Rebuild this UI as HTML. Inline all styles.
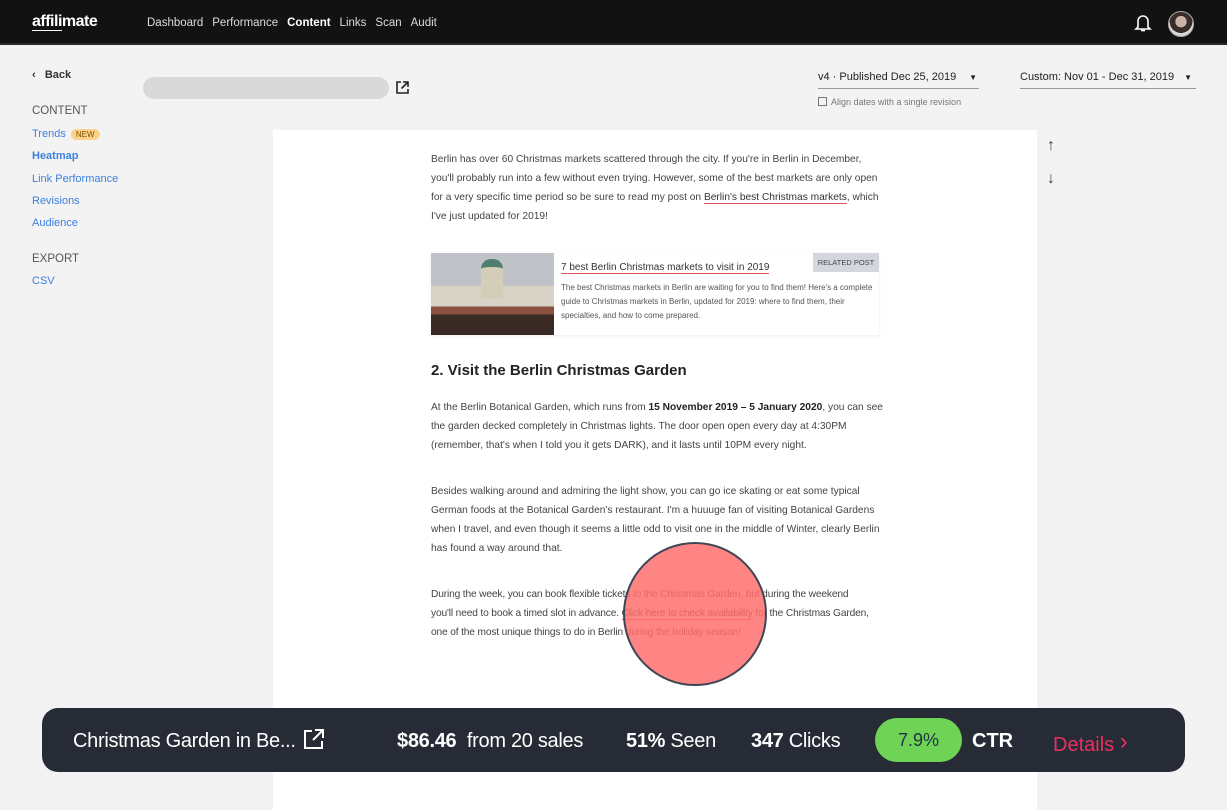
<!DOCTYPE html>
<html><head><meta charset="utf-8"><style>
*{margin:0;padding:0;box-sizing:border-box}
body{width:1227px;height:799px;overflow:hidden;background:#f3f3f3;font-family:"Liberation Sans",sans-serif;position:relative}
.hdr{position:absolute;left:0;top:0;width:1227px;height:45px;background:#121212;border-bottom:2px solid #2a2a2a}
.logo{position:absolute;left:32px;top:13px;color:#fff;font-weight:bold;font-size:16px;letter-spacing:-0.5px}
.nav{position:absolute;top:17px;left:147px;color:#ddd;font-size:11.5px}
.nav span{margin-right:9px}
.side{position:absolute;left:32px;font-size:11px}
.blue{color:#3d7fe0}
.p{position:absolute;left:431px;width:452px;font-size:10.2px;color:#444;line-height:19px}
a{color:#333;text-decoration:none;border-bottom:1px solid #d55}
</style></head><body>
<div class="hdr">
<div class="logo"><span style="border-bottom:1px solid #fff">affili</span>mate</div>
<div class="nav"><span>Dashboard</span><span>Performance</span><span style="color:#fff;font-weight:bold">Content</span><span>Links</span><span>Scan</span><span>Audit</span></div>
<svg style="position:absolute;left:1134px;top:13px" width="18" height="20" viewBox="0 0 18 20"><path d="M4 14V8a5 5 0 0 1 10 0v6l2 2H2z" fill="none" stroke="#fff" stroke-width="1.6"/><path d="M7 17.5h4" stroke="#fff" stroke-width="1.6"/></svg>
<div style="position:absolute;left:1168px;top:11px;width:26px;height:26px;border-radius:50%;background:radial-gradient(circle at 50% 40%,#c9b3a6 0 30%,#3a2c28 31% 60%,#d8d8d8 61%);border:1px solid #aaa"></div>
</div>
<div class="side" style="top:69px;font-weight:bold;color:#333;font-size:11px">&#8249;&nbsp;&nbsp; Back</div>
<div class="side" style="top:105px;color:#555;font-size:11.5px">CONTENT</div>
<div class="side blue" style="top:128px">Trends <span style="background:#fbd48a;color:#7a4a00;font-size:8px;border-radius:8px;padding:1px 5px;margin-left:2px">NEW</span></div>
<div class="side blue" style="top:150px;font-weight:bold">Heatmap</div>
<div class="side blue" style="top:173px">Link Performance</div>
<div class="side blue" style="top:195px">Revisions</div>
<div class="side blue" style="top:217px">Audience</div>
<div class="side" style="top:253px;color:#555;font-size:11.5px">EXPORT</div>
<div class="side blue" style="top:275px">CSV</div>
<div style="position:absolute;left:143px;top:77px;width:246px;height:22px;border-radius:11px;background:#d9d9d9"></div>
<svg style="position:absolute;left:395px;top:80px" width="15" height="15" viewBox="0 0 15 15"><path d="M6 2H2v11h11V9M8 2h5v5M13 2L6.5 8.5" fill="none" stroke="#222" stroke-width="1.6"/></svg>
<div style="position:absolute;left:818px;top:71px;width:161px;height:18px;border-bottom:1px solid #999;font-size:11px;color:#222">v4 · Published Dec 25, 2019<span style="position:absolute;right:2px;font-size:8px;top:2px">▼</span></div>
<div style="position:absolute;left:818px;top:97px;font-size:9px;color:#777"><span style="display:inline-block;width:9px;height:9px;border:1px solid #777;vertical-align:-1px;margin-right:4px"></span>Align dates with a single revision</div>
<div style="position:absolute;left:1020px;top:71px;width:176px;height:18px;border-bottom:1px solid #999;font-size:11px;color:#222">Custom: Nov 01 - Dec 31, 2019<span style="position:absolute;right:4px;font-size:8px;top:2px">▼</span></div>
<div style="position:absolute;left:1047px;top:137px;font-size:16px;color:#444">↑</div>
<div style="position:absolute;left:1047px;top:170px;font-size:16px;color:#444">↓</div>
<div style="position:absolute;left:273px;top:130px;width:764px;height:680px;background:#fff"></div>
<div class="p" style="top:150px">Berlin has over 60 Christmas markets scattered through the city. If you're in Berlin in December, you'll probably run into a few without even trying. However, some of the best markets are only open for a very specific time period so be sure to read my post on <a>Berlin's best Christmas markets</a>, which I've just updated for 2019!</div>
<div style="position:absolute;left:431px;top:253px;width:448px;height:82px;background:#fff;box-shadow:0 1px 3px rgba(0,0,0,.08)">
<div style="position:absolute;left:0;top:0;width:123px;height:82px;background:linear-gradient(#bfc3c7 0 40%,#d8d3c6 40% 65%,#8a5040 65% 75%,#3a2a25 75%)"><div style="position:absolute;left:50px;top:6px;width:22px;height:40px;background:#d4cdb7;border-radius:10px 10px 0 0;border-top:8px solid #4d7d70"></div></div>
<div style="position:absolute;left:130px;top:9px;font-size:10px;color:#333"><a>7 best Berlin Christmas markets to visit in 2019</a></div>
<div style="position:absolute;left:382px;top:0;width:66px;height:19px;background:#d3d6dc;font-size:7.5px;color:#444;text-align:center;line-height:19px">RELATED POST</div>
<div style="position:absolute;left:130px;top:28px;width:315px;font-size:8px;line-height:14px;color:#555">The best Christmas markets in Berlin are waiting for you to find them! Here's a complete guide to Christmas markets in Berlin, updated for 2019: where to find them, their specialties, and how to come prepared.</div>
</div>
<div style="position:absolute;left:431px;top:362px;font-size:15px;font-weight:bold;color:#222">2. Visit the Berlin Christmas Garden</div>
<div class="p" style="top:398px">At the Berlin Botanical Garden, which runs from <b style="color:#222">15 November 2019 – 5 January 2020</b>, you can see the garden decked completely in Christmas lights. The door open open every day at 4:30PM (remember, that's when I told you it gets DARK), and it lasts until 10PM every night.</div>
<div class="p" style="top:482px">Besides walking around and admiring the light show, you can go ice skating or eat some typical German foods at the Botanical Garden's restaurant. I'm a huuuge fan of visiting Botanical Gardens when I travel, and even though it seems a little odd to visit one in the middle of Winter, clearly Berlin has found a way around that.</div>
<div class="p" style="top:585px;width:480px;white-space:nowrap;letter-spacing:-0.15px">During the week, you can book flexible tickets to the Christmas Garden, but during the weekend<br>you'll need to book a timed slot in advance. <a>Click here to check availability</a> for the Christmas Garden,<br>one of the most unique things to do in Berlin during the holiday season!</div>
<div style="position:absolute;left:623px;top:542px;width:144px;height:144px;border-radius:50%;background:rgba(255,110,110,.85);border:2px solid #3e4654"></div>
<div style="position:absolute;left:42px;top:708px;width:1143px;height:64px;border-radius:16px;background:#262b36;color:#fff;font-size:20px">
<span style="position:absolute;left:31px;top:22px;letter-spacing:-0.3px">Christmas Garden in Be...</span>
<svg style="position:absolute;left:261px;top:20px" width="22" height="22" viewBox="0 0 22 22"><path d="M9 3H2v17h17v-7M12 2h8v8M20 2L10 12" fill="none" stroke="#fff" stroke-width="2"/></svg>
<span style="position:absolute;left:355px;top:22px;letter-spacing:-0.3px"><b>$86.46</b>&nbsp; from 20 sales</span>
<span style="position:absolute;left:584px;top:22px;letter-spacing:-0.3px"><b>51%</b> Seen</span>
<span style="position:absolute;left:709px;top:22px;letter-spacing:-0.3px"><b>347</b> Clicks</span>
<span style="position:absolute;left:833px;top:10px;width:87px;height:44px;border-radius:22px;background:#6fd456;color:#234;text-align:center;line-height:44px;font-size:18px">7.9%</span>
<span style="position:absolute;left:930px;top:22px;font-weight:bold">CTR</span>
<span style="position:absolute;left:1011px;top:22px;color:#e8305e">Details <span style="font-size:24px;position:relative;top:-2px">›</span></span>
</div>
</body></html>
